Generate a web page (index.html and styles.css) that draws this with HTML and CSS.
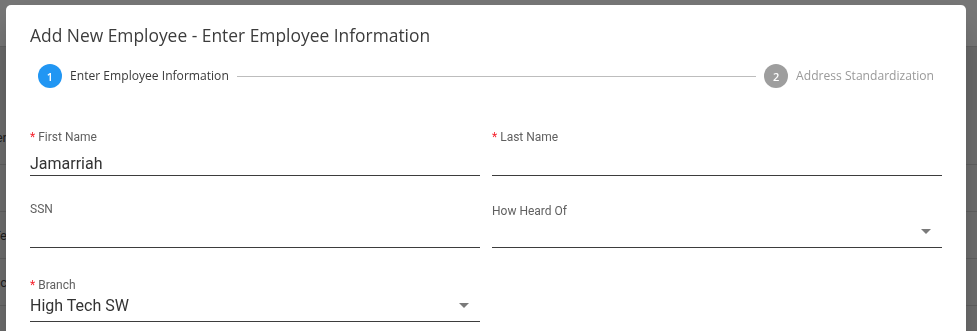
FILE: index.html
```html
<!DOCTYPE html>
<html lang="en">
<head>
<meta charset="utf-8">
<title>Add New Employee</title>
<link rel="stylesheet" href="styles.css">
</head>
<body>
<div class="page">
  <div class="page-header"></div>
  <div class="page-toolbar"></div>
  <div class="page-row tall"><span class="cell"><span>Order</span></span></div>
  <div class="page-row"><span class="cell"><span></span></span></div>
  <div class="page-row"><span class="cell"><span>Te</span></span></div>
  <div class="page-row"><span class="cell"><span>Branc</span></span></div>
  <div class="page-row"><span class="cell"><span></span></span></div>
</div>

<div class="dialog" role="dialog" aria-labelledby="dlg-title">
  <h2 class="dialog-title" id="dlg-title">Add New Employee - Enter Employee Information</h2>

  <div class="stepper">
    <div class="step is-active">
      <span class="step-icon">1</span>
      <span class="step-label">Enter Employee Information</span>
    </div>
    <div class="step-line"></div>
    <div class="step">
      <span class="step-icon">2</span>
      <span class="step-label">Address Standardization</span>
    </div>
  </div>

  <form class="form">
    <div class="field">
      <label class="field-label"><span class="req">*</span>First Name</label>
      <input class="text-input" type="text" value="Jamarriah">
    </div>
    <div class="field">
      <label class="field-label"><span class="req">*</span>Last Name</label>
      <input class="text-input" type="text" value="">
    </div>

    <div class="field">
      <label class="field-label">SSN</label>
      <input class="text-input" type="text" value="">
    </div>
    <div class="field">
      <label class="field-label">How Heard Of</label>
      <div class="select"><span class="select-value"></span><span class="select-arrow"></span></div>
    </div>

    <div class="field">
      <label class="field-label"><span class="req">*</span>Branch</label>
      <div class="select"><span class="select-value">High Tech SW</span><span class="select-arrow"></span></div>
    </div>
  </form>
</div>
</body>
</html>
```

FILE: styles.css
```css
* { box-sizing: border-box; }

html, body {
  margin: 0;
  height: 100%;
  overflow: hidden;
}

body {
  background: #6e6e6e;
  font-family: Roboto, "Liberation Sans", sans-serif;
}

/* dimmed page behind the modal */
.page-header {
  height: 47px;
  background: #777777;
  border-bottom: 1px solid #626262;
}
.page-toolbar {
  height: 63px;
  background: #6a6a6a;
}
.page-row {
  height: 47px;
  border-bottom: 1px solid #606060;
  display: flex;
  align-items: center;
}
.page-row.tall { height: 55px; }
.cell {
  width: 7px;
  overflow: hidden;
  display: flex;
  justify-content: flex-end;
  white-space: nowrap;
  font-size: 13px;
  color: #1e1e1e;
}

/* modal */
.dialog {
  position: fixed;
  top: 5px;
  left: 6px;
  width: 960px;
  height: 420px;
  background: #ffffff;
  border-radius: 5px;
  box-shadow: 0 11px 15px -7px rgba(0,0,0,.2), 0 24px 38px 3px rgba(0,0,0,.14);
  padding: 18px 24px 0;
}

.dialog-title {
  margin: 0;
  font-family: "Open Sans", "Liberation Sans", sans-serif;
  font-weight: 400;
  font-size: 17.4px;
  line-height: 24px;
  color: #3c3c3c;
}

.stepper {
  margin-top: 17px;
  padding: 0 8px;
  display: flex;
  align-items: center;
  height: 24px;
}
.step {
  display: flex;
  align-items: center;
  gap: 8px;
}
.step-icon {
  width: 24px;
  height: 24px;
  border-radius: 50%;
  background: #9e9e9e;
  color: #ffffff;
  font-family: "Open Sans", "Liberation Sans", sans-serif;
  font-size: 11px;
  font-weight: 600;
  display: flex;
  align-items: center;
  justify-content: center;
}
.step.is-active .step-icon { background: #2196f3; }
.step-label {
  font-family: "Open Sans", "Liberation Sans", sans-serif;
  font-size: 12.1px;
  line-height: 16px;
  color: #9a9a9a;
}
.step.is-active .step-label { color: #3a3a3a; }
.step-line {
  flex: 1;
  height: 1px;
  background: #bdbdbd;
  margin: 0 8px;
}

/* form */
.form {
  margin-top: 41px;
  display: grid;
  grid-template-columns: 1fr 1fr;
  grid-template-rows: 47px 47px 49px;
  column-gap: 12px;
  row-gap: 25px;
  align-items: end;
}
.field {
  display: flex;
  flex-direction: column;
}
.field-label {
  font-size: 12px;
  line-height: 16px;
  color: #5f5f5f;
}
.req {
  color: #f5222d;
  margin-right: 3px;
}
.text-input {
  display: block;
  width: 100%;
  height: 31px;
  padding: 6px 0 0;
  margin: 0;
  border: none;
  border-bottom: 1px solid #3d3d3d;
  outline: none;
  background: transparent;
  font-family: Roboto, "Liberation Sans", sans-serif;
  font-size: 16px;
  color: #333333;
}
.select {
  display: flex;
  align-items: center;
  justify-content: space-between;
  height: 29px;
  padding: 1px 11px 3px 0;
  border-bottom: 1px solid #3d3d3d;
}
.select-value {
  font-size: 16px;
  line-height: 24px;
  color: #333333;
}
.select-arrow {
  width: 0;
  height: 0;
  border-left: 5px solid transparent;
  border-right: 5px solid transparent;
  border-top: 5px solid #7a7a7a;
  margin-top: -2px;
}
```
